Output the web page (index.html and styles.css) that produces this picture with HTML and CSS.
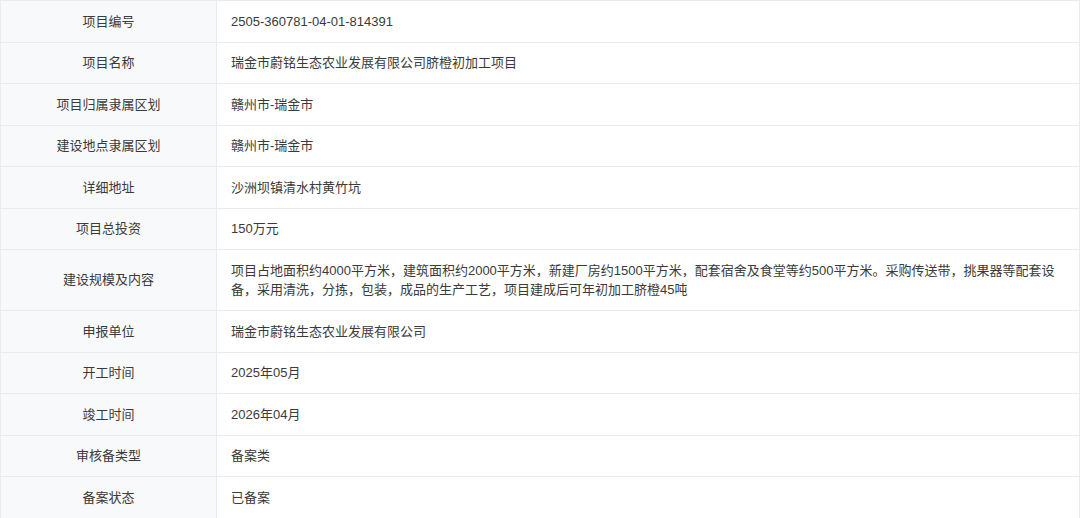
FILE: index.html
```html
<!DOCTYPE html>
<html lang="zh-CN">
<head>
<meta charset="utf-8">
<title>项目信息</title>
<link rel="stylesheet" href="styles.css">
</head>
<body>
<table class="info">
  <tbody>
    <tr><th class="label">项目编号</th><td class="value">2505-360781-04-01-814391</td></tr>
    <tr><th class="label">项目名称</th><td class="value">瑞金市蔚铭生态农业发展有限公司脐橙初加工项目</td></tr>
    <tr><th class="label">项目归属隶属区划</th><td class="value">赣州市-瑞金市</td></tr>
    <tr><th class="label">建设地点隶属区划</th><td class="value">赣州市-瑞金市</td></tr>
    <tr><th class="label">详细地址</th><td class="value">沙洲坝镇清水村黄竹坑</td></tr>
    <tr><th class="label">项目总投资</th><td class="value">150万元</td></tr>
    <tr><th class="label">建设规模及内容</th><td class="value">项目占地面积约4000平方米，建筑面积约2000平方米，新建厂房约1500平方米，配套宿舍及食堂等约500平方米。采购传送带，挑果器等配套设备，采用清洗，分拣，包装，成品的生产工艺，项目建成后可年初加工脐橙45吨</td></tr>
    <tr><th class="label">申报单位</th><td class="value">瑞金市蔚铭生态农业发展有限公司</td></tr>
    <tr><th class="label">开工时间</th><td class="value">2025年05月</td></tr>
    <tr><th class="label">竣工时间</th><td class="value">2026年04月</td></tr>
    <tr><th class="label">审核备类型</th><td class="value">备案类</td></tr>
    <tr><th class="label">备案状态</th><td class="value">已备案</td></tr>
  </tbody>
</table>
</body>
</html>
```
FILE: styles.css
```css
html, body {
  margin: 0;
  padding: 0;
  background: #ffffff;
}
.info {
  width: 1080px;
  border-collapse: collapse;
  table-layout: fixed;
  font-family: "Liberation Sans", "Noto Sans CJK SC", sans-serif;
  font-size: 13px;
  color: #3a3a3a;
}
.info th,
.info td {
  border: 1px solid #e9ebef;
  padding: 10.5px 14px;
  line-height: 19.5px;
  vertical-align: middle;
}
.label {
  width: 216px;
  box-sizing: border-box;
  background: #f8f9fb;
  font-weight: normal;
  text-align: center;
}
.value {
  text-align: left;
  background: #ffffff;
}
```
